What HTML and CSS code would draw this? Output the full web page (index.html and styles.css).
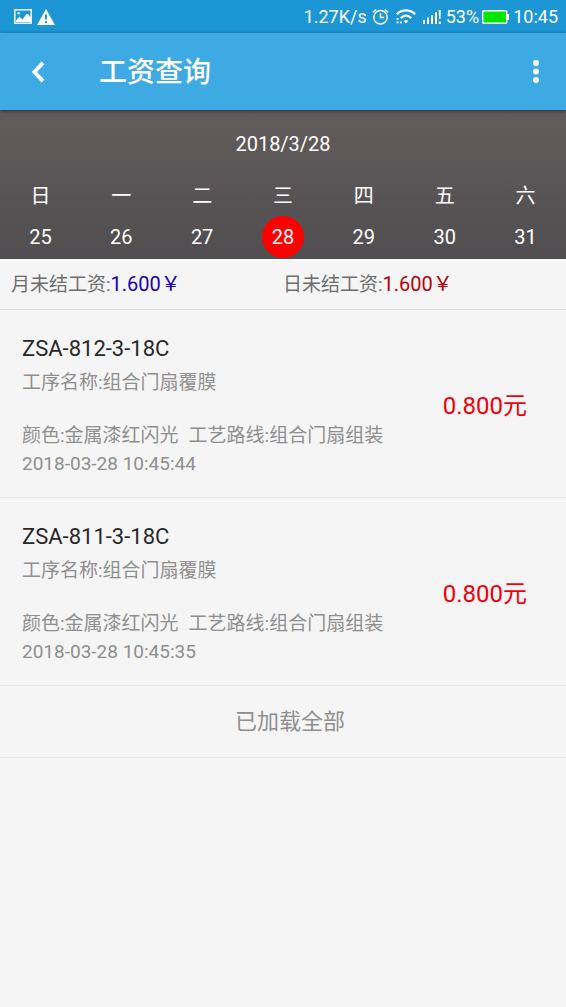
FILE: index.html
```html
<!DOCTYPE html>
<html lang="zh-CN">
<head>
<meta charset="utf-8">
<meta name="viewport" content="width=device-width, initial-scale=1">
<title>工资查询</title>
<link rel="stylesheet" href="styles.css">
</head>
<body>
<div class="status-bar">
  <div class="status-left">
    <svg width="18" height="15" viewBox="0 0 18 15" aria-hidden="true"><rect x=".8" y=".8" width="16.4" height="13.4" fill="none" stroke="#fff" stroke-width="1.4"/><path fill="#fff" d="M2 13v-1.500l3.500-4 3 3 4-5.500h1.500l3 3V13z"/><circle cx="4.600" cy="4.300" r="1.200" fill="#fff"/></svg>
    <svg width="18" height="16" viewBox="0 0 18 16" aria-hidden="true"><path fill="#fff" fill-rule="evenodd" d="M9 0l9 16H0zM8 5.500v5h2v-5zm0 6.500v2h2v-2z"/></svg>
  </div>
  <div class="status-right">
    <span>1.27K/s</span>
    <svg class="alarm" width="17" height="17" viewBox="0 0 17 17" fill="none" stroke="#fff" stroke-width="1.500" aria-hidden="true"><circle cx="8.500" cy="9.300" r="6.700"/><path d="M8.500 5.300v4.200h3.700M1 4.200l3-2.700M16 4.200l-3-2.700"/></svg>
    <svg class="wifi" width="20" height="15" viewBox="0 0 20 15" aria-hidden="true"><path fill="none" stroke="#fff" stroke-width="2.200" d="M.8 5.200c5.400-5.200 13-5.200 18.400 0M4.700 9.200c3.300-3.200 7.300-3.200 10.600 0"/><path fill="#fff" d="M7.800 12c1.400-1.300 3-1.300 4.400 0L10 14.400zM.6 9h2v1.700h-2zM.6 12.500h2v1.700h-2zM4 12.500h2v1.700H4z"/></svg>
    <svg class="signal" width="18" height="14" viewBox="0 0 18 14" fill="#fff" aria-hidden="true"><path d="M0 10h2v4H0zM4 7.500h2V14H4zM8 5h2v9H8zM12 2h2v12h-2zM15.700 0h2.200l-.4 9h-1.400zM15.800 11.500h2V14h-2z"/></svg>
    <span>53%</span>
    <svg class="battery" width="27" height="14" viewBox="0 0 27 14" aria-hidden="true"><rect x=".7" y=".7" width="24" height="12.600" rx="1" fill="#00e600" stroke="#fff" stroke-width="1.400"/><path fill="#fff" d="M25 4h2v6h-2z"/></svg>
    <span>10:45</span>
  </div>
</div>
<header class="app-bar">
  <button class="icon-button" type="button" aria-label="返回"><svg width="14" height="22" viewBox="0 0 14 22" fill="none" stroke="#fff" stroke-width="4" aria-hidden="true"><path d="M12 1.800L3.400 11l8.600 9.200"/></svg></button>
  <h1 class="title">工资查询</h1>
  <button class="icon-button" type="button" aria-label="更多"><svg width="6" height="23" viewBox="0 0 6 23" fill="#fff" aria-hidden="true"><circle cx="3" cy="3" r="3"/><circle cx="3" cy="11.500" r="3"/><circle cx="3" cy="20" r="3"/></svg></button>
</header>
<main>
  <section class="calendar">
    <div class="current-date">2018/3/28</div>
    <div class="week weekdays"><span>日</span><span>一</span><span>二</span><span>三</span><span>四</span><span>五</span><span>六</span></div>
    <div class="week">
      <button class="day" type="button">25</button>
      <button class="day" type="button">26</button>
      <button class="day" type="button">27</button>
      <button class="day selected" type="button" aria-pressed="true">28</button>
      <button class="day" type="button">29</button>
      <button class="day" type="button">30</button>
      <button class="day" type="button">31</button>
    </div>
  </section>
  <section class="summary">
    <div class="total">月未结工资:<span class="amount month-amount">1.600￥</span></div>
    <div class="total">日未结工资:<span class="amount day-amount">1.600￥</span></div>
  </section>
  <section class="records">
    <article class="record">
      <div class="record-body">
        <h2 class="record-code">ZSA-812-3-18C</h2>
        <p class="process">工序名称:组合门扇覆膜</p>
        <p class="detail"><span>颜色:金属漆红闪光</span><span>工艺路线:组合门扇组装</span></p>
        <p class="time">2018-03-28 10:45:44</p>
      </div>
      <div class="price">0.800元</div>
    </article>
    <article class="record">
      <div class="record-body">
        <h2 class="record-code">ZSA-811-3-18C</h2>
        <p class="process">工序名称:组合门扇覆膜</p>
        <p class="detail"><span>颜色:金属漆红闪光</span><span>工艺路线:组合门扇组装</span></p>
        <p class="time">2018-03-28 10:45:35</p>
      </div>
      <div class="price">0.800元</div>
    </article>
  </section>
  <div class="load-state">已加载全部</div>
</main>
</body>
</html>
```
FILE: styles.css
```css
* { box-sizing: border-box; }
body {
  margin: 0;
  background: #f5f5f5;
  color: #8f8f8f;
  font-family: Roboto, "Noto Sans CJK SC", sans-serif;
  font-size: 19px;
  line-height: 28px;
}
h1, h2, p { margin: 0; font-weight: 400; }
svg { display: block; flex: none; }
button {
  margin: 0;
  padding: 0;
  border: 0;
  background: none;
  color: inherit;
  font: inherit;
}
.status-bar {
  display: flex;
  align-items: center;
  justify-content: space-between;
  height: 33px;
  padding: 0 8px 0 14px;
  background: #1c96d5;
  color: #fff;
  font-size: 18px;
}
.status-left { display: flex; align-items: center; gap: 5px; }
.status-right { display: flex; align-items: center; }
.alarm { margin-left: 5px; }
.wifi { margin-left: 7px; }
.signal { margin: 0 5px 0 7px; }
.battery { margin: 0 4px 0 3px; }
.app-bar {
  position: relative;
  display: flex;
  align-items: center;
  height: 77px;
  padding: 0 6px 0 14px;
  background: #3daae4;
  color: #fff;
  box-shadow: 0 1px 4px rgba(0, 0, 0, .5);
}
.icon-button {
  display: grid;
  place-items: center;
  width: 48px;
  height: 48px;
}
.title {
  flex: 1;
  padding: 2px 0 0 37px;
  font-size: 28px;
  font-weight: 500;
  line-height: 40px;
}
.calendar {
  padding-top: 20px;
  background: linear-gradient(#635c5c, #504e50);
  color: #fff;
  font-size: 20px;
  text-align: center;
}
.week { display: grid; grid-template-columns: repeat(7, 1fr); justify-items: center; }
.weekdays { padding: 24px 0 6px; }
.day { width: 42px; height: 42px; border-radius: 50%; margin-bottom: 1px; }
.selected { background: #fe0000; }
.summary {
  display: grid;
  grid-template-columns: 1fr 1fr;
  padding: 11px 0 10px;
  border-bottom: 1px solid #dcdcdc;
  color: #6e6e6e;
}
.total:first-child { padding-left: 11px; }
.amount { font-size: 20px; }
.month-amount { color: #1c00b8; }
.day-amount { color: #b8000c; }
.record {
  display: flex;
  align-items: center;
  justify-content: space-between;
  padding: 23px 39px 19px 22px;
  border-bottom: 1px solid #e8e8e8;
}
.record-code { color: #282828; font-size: 22px; line-height: 32px; }
.process { padding: 4px 0 25px; }
.detail { display: flex; flex-wrap: wrap; column-gap: 10px; }
.price { color: #f0000a; font-size: 24px; white-space: nowrap; }
.load-state {
  padding: 20px 0 19px 14px;
  border-bottom: 1px solid #e8e8e8;
  font-size: 22px;
  line-height: 32px;
  text-align: center;
}
```
